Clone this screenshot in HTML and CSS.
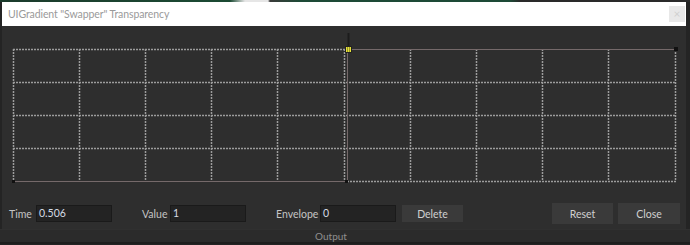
FILE: index.html
```html
<!DOCTYPE html>
<html lang="en">
<head>
    <meta charset="UTF-8">
    <title>UIGradient Transparency</title>
    <link rel="stylesheet" href="styles.css">
</head>
<body>
    <div class="desk-top"></div>
    <div class="window">
        <div class="titlebar">
            <span class="title">UIGradient "Swapper" Transparency</span>
            <span class="close-x">&times;</span>
        </div>
        <div class="window-body">
            <svg class="graph" width="684" height="165" viewBox="2 26 684 165">
                <g class="grid" stroke="#9c9c9c" stroke-width="1.5" stroke-dasharray="2 1" fill="none">
                    <!-- horizontal -->
                    <line x1="13" y1="49.5" x2="346" y2="49.5"/>
                    <line x1="13" y1="82.5" x2="676" y2="82.5"/>
                    <line x1="13" y1="115.5" x2="676" y2="115.5"/>
                    <line x1="13" y1="148.5" x2="676" y2="148.5"/>
                    <line x1="347" y1="181.5" x2="676" y2="181.5"/>
                    <!-- vertical -->
                    <line x1="13.5" y1="49" x2="13.5" y2="181"/>
                    <line x1="79.5" y1="49" x2="79.5" y2="181"/>
                    <line x1="145.5" y1="49" x2="145.5" y2="181"/>
                    <line x1="211.5" y1="49" x2="211.5" y2="181"/>
                    <line x1="277.5" y1="49" x2="277.5" y2="181"/>
                    <line x1="344.5" y1="49" x2="344.5" y2="181"/>
                    <line x1="410.5" y1="49" x2="410.5" y2="181"/>
                    <line x1="476.5" y1="49" x2="476.5" y2="181"/>
                    <line x1="542.5" y1="49" x2="542.5" y2="181"/>
                    <line x1="608.5" y1="49" x2="608.5" y2="181"/>
                    <line x1="675.5" y1="49" x2="675.5" y2="181"/>
                </g>
                <g stroke="#75696a" stroke-width="1" fill="none">
                    <polyline points="13,181.5 347.5,181.5 347.5,49.5 676,49.5"/>
                </g>
                <line x1="348.5" y1="33" x2="348.5" y2="47" stroke="#1c1c1c" stroke-width="2"/>
                <rect x="12" y="180" width="3" height="3" fill="#111"/>
                <rect x="345" y="180" width="3" height="3" fill="#111"/>
                <rect x="674" y="47" width="4" height="4" fill="#111"/>
                <rect x="345.5" y="46.5" width="6" height="6" fill="#e6e23c" stroke="#222" stroke-width="1"/>
                <line x1="347.5" y1="47" x2="347.5" y2="52" stroke="#8a8620" stroke-width="0.8"/>
                <line x1="349.5" y1="47" x2="349.5" y2="52" stroke="#8a8620" stroke-width="0.8"/>
            </svg>
            <div class="controls">
                <label class="lbl lbl-time">Time</label>
                <div class="field">0.506</div>
                <label class="lbl lbl-value">Value</label>
                <div class="field">1</div>
                <label class="lbl lbl-env">Envelope</label>
                <div class="field">0</div>
                <button class="btn btn-delete">Delete</button>
                <button class="btn btn-reset">Reset</button>
                <button class="btn btn-close">Close</button>
            </div>
        </div>
    </div>
    <div class="output-bar">Output</div>
</body>
</html>
```

FILE: styles.css
```css
body {
    margin: 0;
    width: 690px;
    height: 245px;
    overflow: hidden;
    background: #242424;
    font-family: Lato, "Noto Sans", sans-serif;
}
.desk-top {
    height: 2px;
    background: linear-gradient(to right, #1b3b2c 0, #1b4a33 230px, #e6e6e6 245px, #e6e6e6 268px, #3a3a3a 270px, #1d4a36 300px, #1d4a36 510px, #2a2a2a 520px);
}
.window {
    margin-left: 2px;
    width: 684px;
}
.titlebar {
    height: 24px;
    background: #ffffff;
    display: flex;
    align-items: center;
    justify-content: space-between;
    padding: 0 1px 0 6px;
}
.title {
    font-size: 10.5px;
    color: #9a9a9a;
    letter-spacing: -0.1px;
}
.close-x {
    width: 16px;
    height: 16px;
    background: #e8e8e8;
    color: #d0d0d0;
    font-size: 12px;
    line-height: 16px;
    text-align: center;
}
.window-body {
    height: 203px;
    background: #2e2e2e;
    display: flex;
    flex-direction: column;
}
.graph {
    display: block;
}
.controls {
    display: flex;
    align-items: center;
    height: 21px;
    margin-top: 12px;
    padding: 0 6px 0 7px;
    color: #c4c4c4;
    font-size: 10.5px;
}
.controls > * {
    flex: none;
}
.lbl {
    width: 27px;
}
.lbl-value {
    margin-left: 30px;
    width: 28px;
}
.lbl-env {
    margin-left: 30px;
    width: 44px;
}
.field {
    width: 72px;
    height: 15px;
    background: #232323;
    border: 1px solid #1a1a1a;
    color: #d4dae4;
    font-size: 10.5px;
    line-height: 15px;
    padding-left: 2px;
    box-sizing: content-box;
}
.btn {
    font-family: inherit;
    font-size: 10.5px;
    color: #d0d0d0;
    background: #3a3a3a;
    border: none;
    padding: 0;
    width: 61px;
}
.btn-delete {
    height: 17px;
    margin-left: 6px;
}
.btn-reset {
    height: 21px;
    margin-left: auto;
}
.btn-close {
    height: 21px;
    width: 62px;
    margin-left: 5px;
}
.output-bar {
    height: 12px;
    background: #2b2b2b;
    border-top: 1px solid #303030;
    border-bottom: 2px solid #1e1e1e;
    text-align: center;
    padding-right: 28px;
    font-size: 10px;
    line-height: 12px;
    color: #8f8f8f;
}
```
